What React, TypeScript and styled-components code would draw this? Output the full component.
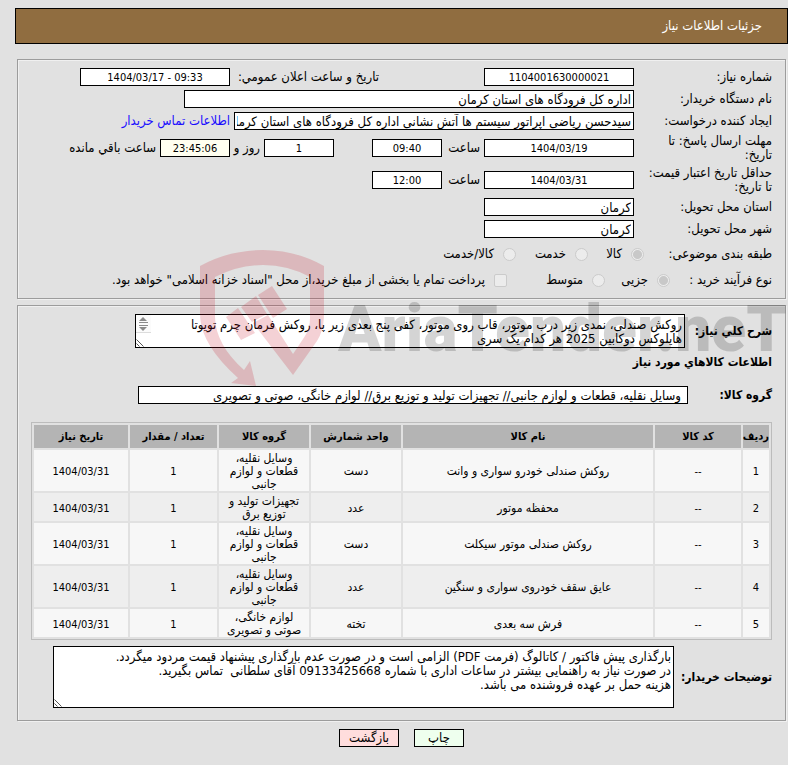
import React from "react";
import styled, { createGlobalStyle } from "styled-components";

const GlobalStyle = createGlobalStyle`
  * { box-sizing: border-box; }
  body {
    margin: 0;
    background: #e1e1e1;
    color: #000;
    font-family: "DejaVu Sans Condensed", "DejaVu Sans", sans-serif;
    font-size: 13px;
    line-height: 14px;
  }
  input, textarea, button { font: inherit; color: inherit; }
`;

const Page = styled.main`
  position: relative;
  overflow: hidden;
  padding: 8px 0 17px;
`;

const TitleBar = styled.header`
  display: flex;
  align-items: center;
  height: 36px;
  margin-inline-end: 15px;
  padding-inline-start: 25px;
  border: 1px solid #000;
  background: #906d40;
  color: #fff;
`;

const Title = styled.h1`
  margin: 0;
  font-size: 13px;
  font-weight: normal;
`;

const Panel = styled.fieldset<{ $gap: number }>`
  min-width: 0;
  margin: ${(p) => p.$gap}px 2px 0 17px;
  padding: 6px 13px;
  border: 1px solid #9c9c9c;
  box-shadow: inset 1px 1px #f0f0f0, 1px 1px #f0f0f0;
`;

const Row = styled.div<{ $height: number }>`
  display: flex;
  align-items: center;
  min-height: ${(p) => p.$height}px;
`;

const Label = styled.label<{ $width?: number; $bold?: boolean }>`
  flex: none;
  width: ${(p) => (p.$width ? p.$width + "px" : "auto")};
  font-size: ${(p) => (p.$bold ? 12 : 13)}px;
  font-weight: ${(p) => (p.$bold ? "bold" : "normal")};
`;

const Caption = styled.span<{ $width: number }>`
  flex: none;
  width: ${(p) => p.$width}px;
`;

const Field = styled.input<{ $width: number; $number?: boolean; $tint?: boolean }>`
  flex: none;
  width: ${(p) => p.$width}px;
  height: 18px;
  padding: 0 2px;
  border: 1px solid #000;
  border-radius: 0;
  background: ${(p) => (p.$tint ? "#fffff0" : "#fff")};
  font-size: ${(p) => (p.$number ? 11 : 13)}px;
  text-align: ${(p) => (p.$number ? "center" : "start")};
`;

const GroupField = styled(Field)`
  padding: 0 6px;
`;

const Spacer = styled.span<{ $width: number }>`
  flex: none;
  width: ${(p) => p.$width}px;
`;

const Link = styled.a`
  margin-inline-start: 4px;
  color: #1a0dff;
  text-decoration: none;
`;

const Option = styled.label<{ $width?: number }>`
  display: flex;
  flex: none;
  align-items: center;
  gap: 9px;
  width: ${(p) => (p.$width ? p.$width + "px" : "auto")};
`;

const Radio = styled.input.attrs({ type: "radio" })`
  appearance: none;
  flex: none;
  width: 13px;
  height: 13px;
  margin: 0;
  border: 1px solid #cbcbcb;
  border-radius: 50%;
  background: #ececec;
  &:checked {
    background: radial-gradient(circle, #c8c8c8 4px, #ececec 5px);
  }
`;

const Check = styled.input.attrs({ type: "checkbox" })`
  appearance: none;
  flex: none;
  width: 13px;
  height: 13px;
  margin: 0;
  border: 1px solid #cbcbcb;
  border-radius: 2px;
  background: #ececec;
`;

const AreaBox = styled.div<{ $width: number }>`
  position: relative;
  flex: none;
  width: ${(p) => p.$width}px;
`;

const Area = styled.textarea<{ $height: number; $inset: number }>`
  display: block;
  width: 100%;
  height: ${(p) => p.$height}px;
  padding: 3px 2px 0;
  padding-inline-end: ${(p) => p.$inset}px;
  overflow: hidden;
  border: 1px solid #000;
  border-radius: 0;
  background: #fff;
  resize: none;
`;

const Grip = styled.svg`
  position: absolute;
  left: 1px;
  bottom: 1px;
`;

const Scroller = styled.svg`
  position: absolute;
  left: 1px;
  top: 1px;
`;

const Heading = styled.h2`
  margin: 5px 0 0;
  font-size: 12px;
  line-height: 14px;
`;

const Goods = styled.table`
  width: 100%;
  margin-top: 1px;
  border: 1px solid #bcbcbc;
  border-collapse: separate;
  border-spacing: 2px;
  table-layout: fixed;
  font-size: 12px;
  line-height: 13px;
  text-align: center;
`;

const HeadCell = styled.th<{ $width?: number }>`
  width: ${(p) => (p.$width ? p.$width + "px" : "auto")};
  height: 23px;
  padding: 0;
  background: #b4b4b4;
  font-size: 11px;
  white-space: nowrap;
`;

const BodyRow = styled.tr`
  background: #f7f7f7;
  &:nth-child(even) { background: #eee; }
`;

const Cell = styled.td`
  padding: 2px 6px 0;
`;

const NumberCell = styled(Cell)`
  font-size: 11px;
`;

const Actions = styled.footer`
  display: flex;
  justify-content: center;
  gap: 15px;
  margin-top: 8px;
  padding-left: 15px;
`;

const Action = styled.button<{ $width: number; $color: string }>`
  width: ${(p) => p.$width}px;
  height: 18px;
  padding: 0;
  border: 1px solid #000;
  background: ${(p) => p.$color};
  line-height: 16px;
`;

const Watermark = styled.div`
  position: absolute;
  top: 248px;
  right: 0;
  width: 590px;
  height: 142px;
  pointer-events: none;
`;

const WatermarkName = styled.span`
  position: absolute;
  left: 140px;
  top: 38px;
  color: rgba(0, 0, 0, 0.17);
  font: 900 64px/88px Roboto, "Liberation Sans", sans-serif;
  white-space: nowrap;
`;

const columns: { title: string; width?: number }[] = [
  { title: "ردیف", width: 26 },
  { title: "کد کالا", width: 86 },
  { title: "نام کالا" },
  { title: "واحد شمارش", width: 90 },
  { title: "گروه کالا", width: 90 },
  { title: "تعداد / مقدار", width: 87 },
  { title: "تاریخ نیاز", width: 94 },
];

const goods = [
  { name: "روکش صندلی خودرو سواری و وانت", unit: "دست", group: "وسایل نقلیه، قطعات و لوازم جانبی" },
  { name: "محفظه موتور", unit: "عدد", group: "تجهیزات تولید و توزیع برق" },
  { name: "روکش صندلی موتور سیکلت", unit: "دست", group: "وسایل نقلیه، قطعات و لوازم جانبی" },
  { name: "عایق سقف خودروی سواری و سنگین", unit: "عدد", group: "وسایل نقلیه، قطعات و لوازم جانبی" },
  { name: "فرش سه بعدی", unit: "تخته", group: "لوازم خانگی، صوتی و تصویری" },
];

function ResizeGrip() {
  return (
    <Grip width="9" height="9" viewBox="0 0 9 9" aria-hidden="true">
      <path d="M0.5 1.5L7.5 8.5M0.5 5.5L3.5 8.5" stroke="#555" fill="none" />
    </Grip>
  );
}

function ScrollButtons() {
  return (
    <Scroller width="15" height="18" viewBox="0 0 15 18" aria-hidden="true">
      <rect width="15" height="18" fill="#fbfbfb" />
      <path d="M3 6L7 2L11 6ZM3 12L7 16L11 12Z" fill="#8b8b8b" />
      <path d="M3 7.5H12M3 10.5H12" stroke="#8b8b8b" />
      <path d="M0 17.5H15" stroke="#dcdcdc" />
    </Scroller>
  );
}

export default function App() {
  return (
    <Page dir="rtl" lang="fa">
      <GlobalStyle />
      <TitleBar>
        <Title>جزئیات اطلاعات نیاز</Title>
      </TitleBar>

      <Panel $gap={15}>
        <Row $height={22}>
          <Label $width={138} htmlFor="number">شماره نیاز:</Label>
          <Field id="number" $width={150} $number readOnly value="1104001630000021" />
          <Spacer $width={105} />
          <Label $width={149} htmlFor="announced">تاریخ و ساعت اعلان عمومي:</Label>
          <Field id="announced" $width={150} $number readOnly dir="ltr" value="1404/03/17 - 09:33" />
        </Row>
        <Row $height={22}>
          <Label $width={138} htmlFor="agency">نام دستگاه خریدار:</Label>
          <Field id="agency" $width={450} readOnly value="اداره کل فرودگاه های استان کرمان" />
        </Row>
        <Row $height={22}>
          <Label $width={138} htmlFor="creator">ایجاد کننده درخواست:</Label>
          <Field id="creator" $width={400} readOnly value="سیدحسن ریاضی اپراتور سیستم ها آتش نشانی اداره کل فرودگاه های استان کرمان" />
          <Link href="#contact">اطلاعات تماس خریدار</Link>
        </Row>
        <Row $height={32}>
          <Label $width={138} htmlFor="deadline">مهلت ارسال پاسخ: تا<br />تاریخ:</Label>
          <Field id="deadline" $width={150} $number readOnly value="1404/03/19" />
          <Spacer $width={4} />
          <Label $width={38} htmlFor="deadline-time">ساعت</Label>
          <Field id="deadline-time" $width={70} $number readOnly value="09:40" />
          <Spacer $width={38} />
          <Field id="days" $width={70} $number readOnly value="1" />
          <Spacer $width={4} />
          <Label $width={30} htmlFor="days">روز و</Label>
          <Field id="left" $width={70} $number $tint readOnly value="23:45:06" />
          <Spacer $width={4} />
          <Label htmlFor="left">ساعت باقي مانده</Label>
        </Row>
        <Row $height={32}>
          <Label $width={138} htmlFor="validity">حداقل تاریخ اعتبار قیمت:<br />تا تاریخ:</Label>
          <Field id="validity" $width={150} $number readOnly value="1404/03/31" />
          <Spacer $width={4} />
          <Label $width={38} htmlFor="validity-time">ساعت</Label>
          <Field id="validity-time" $width={70} $number readOnly value="12:00" />
        </Row>
        <Row $height={22}>
          <Label $width={138} htmlFor="province">استان محل تحویل:</Label>
          <Field id="province" $width={150} readOnly value="کرمان" />
        </Row>
        <Row $height={22}>
          <Label $width={138} htmlFor="city">شهر محل تحویل:</Label>
          <Field id="city" $width={150} readOnly value="کرمان" />
        </Row>
        <Row $height={28}>
          <Caption $width={128}>طبقه بندی موضوعی:</Caption>
          <Option $width={56}><Radio name="kind" disabled defaultChecked />کالا</Option>
          <Option $width={72}><Radio name="kind" disabled />خدمت</Option>
          <Option><Radio name="kind" disabled />کالا/خدمت</Option>
        </Row>
        <Row $height={24}>
          <Caption $width={102}>نوع فرآیند خرید :</Caption>
          <Option $width={65}><Radio name="process" disabled defaultChecked />جزیی</Option>
          <Option $width={98}><Radio name="process" disabled />متوسط</Option>
          <Option><Check disabled />پرداخت تمام یا بخشی از مبلغ خرید،از محل "اسناد خزانه اسلامی" خواهد بود.</Option>
        </Row>
      </Panel>

      <Panel $gap={6}>
        <Row $height={38}>
          <Label $width={87} $bold htmlFor="summary">شرح کلي نیاز:</Label>
          <AreaBox $width={550}>
            <Area id="summary" $height={34} $inset={32} readOnly value="روکش صندلی، نمدی زیر درب موتور، قاب روی موتور، کفی پنج بعدی زیر پا، روکش فرمان چرم تویوتا هایلوکس دوکابین 2025 هر کدام یک سری" />
            <ScrollButtons />
            <ResizeGrip />
          </AreaBox>
        </Row>
        <Heading>اطلاعات کالاهاي مورد نیاز</Heading>
        <Row $height={52}>
          <Label $width={84} $bold htmlFor="group">گروه کالا:</Label>
          <GroupField id="group" $width={550} readOnly value="وسایل نقلیه، قطعات و لوازم جانبی// تجهیزات تولید و توزیع برق// لوازم خانگی، صوتی و تصویری" />
        </Row>
        <Goods>
          <thead>
            <tr>
              {columns.map((c) => (
                <HeadCell key={c.title} $width={c.width} scope="col">{c.title}</HeadCell>
              ))}
            </tr>
          </thead>
          <tbody>
            {goods.map((g, i) => (
              <BodyRow key={g.name}>
                <NumberCell>{i + 1}</NumberCell>
                <NumberCell>--</NumberCell>
                <Cell>{g.name}</Cell>
                <Cell>{g.unit}</Cell>
                <Cell>{g.group}</Cell>
                <NumberCell>1</NumberCell>
                <NumberCell>1404/03/31</NumberCell>
              </BodyRow>
            ))}
          </tbody>
        </Goods>
        <Row $height={74}>
          <Label $width={98} $bold htmlFor="notes">توضیحات خریدار:</Label>
          <AreaBox $width={621}>
            <Area
              id="notes"
              $height={62}
              $inset={2}
              readOnly
              value={"بارگذاری پیش فاکتور / کاتالوگ (فرمت PDF) الزامی است و در صورت عدم بارگذاری پیشنهاد قیمت مردود میگردد.\nدر صورت نیاز به راهنمایی بیشتر در ساعات اداری با شماره 09133425668 آقای سلطانی  تماس بگیرید.\nهزینه حمل بر عهده فروشنده می باشد."}
            />
            <ResizeGrip />
          </AreaBox>
        </Row>
      </Panel>

      <Actions>
        <Action type="button" $width={50} $color="#eeffee">چاپ</Action>
        <Action type="button" $width={60} $color="#ffdddd">بازگشت</Action>
      </Actions>

      <Watermark dir="ltr" aria-hidden="true">
        <svg width="130" height="142" viewBox="0 0 130 142">
          <g fill="#c00014" fillOpacity="0.18">
            <path d="M2 18Q31 2 65 2Q98 2 126 18V66Q126 82 119 93L95 127L55 75L70 67L95 106L107 88Q112 80 112 70V29Q90 17 65 17Q40 17 17 29V68Q17 96 46 122L52 113L58 138L33 135L40 130Q2 96 2 66Z" />
            <path d="M43 59L58 48L69 66L54 74Z" />
            <path d="M28 69L40 60L57 85L43 92Z" />
            <path d="M60 47L74 38L89 61L75 70Z" />
          </g>
        </svg>
        <WatermarkName>AriaTender.neT</WatermarkName>
      </Watermark>
    </Page>
  );
}
